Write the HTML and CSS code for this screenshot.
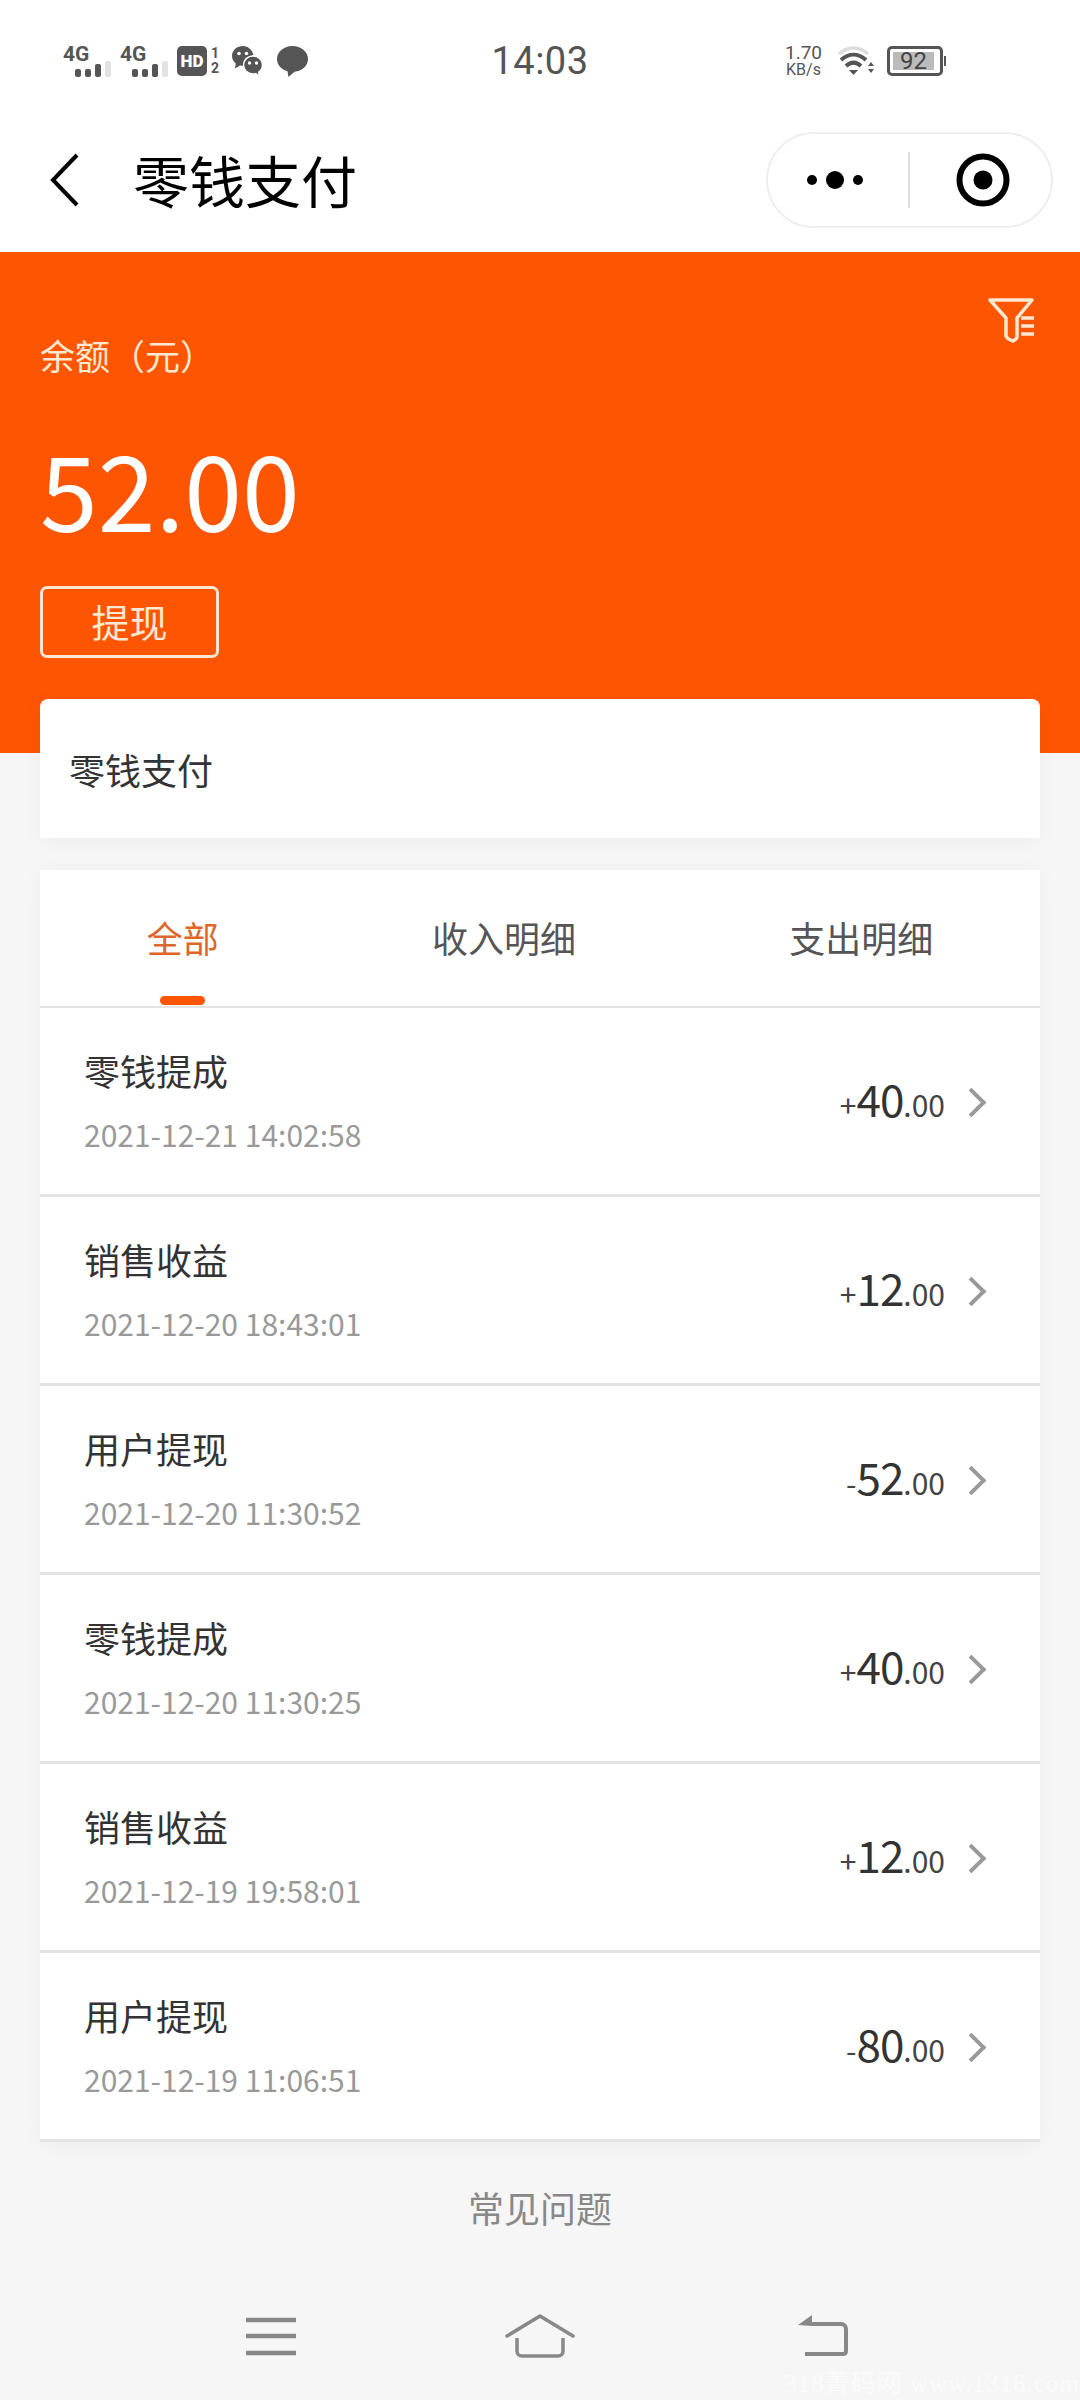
FILE: index.html
```html
<!DOCTYPE html>
<html>
<head>
  <meta charset="utf-8">
  <title>零钱支付</title>
  <link rel="stylesheet" href="styles.css">
</head>
<body>
  <div class="status-bar">
    <div class="status-left">
      <div class="signal">
        <span class="signal-text">4G</span>
        <span class="signal-bars"><i></i><i></i><i></i><i class="off"></i></span>
      </div>
      <div class="signal">
        <span class="signal-text">4G</span>
        <span class="signal-bars"><i></i><i></i><i></i><i class="off"></i></span>
      </div>
      <span class="hd-box">HD</span>
      <span class="sim-num"><span>1</span><span>2</span></span>
      <svg class="icon-wechat" width="31" height="30" viewBox="0 0 31 30">
        <path d="M11 0C5 0 0 4 0 10c0 3.200 1.600 5.800 3.800 7.600L3 22.500l5-3c1 .3 2 .4 3 .4 1.200 0 2.300-.2 3.400-.5C13.900 18 15 11 21.500 9 20.500 4 16 0 11 0z" fill="#555"/>
        <circle cx="7" cy="7.500" r="1.800" fill="#fff"/>
        <circle cx="14.500" cy="7.500" r="1.800" fill="#fff"/>
        <path d="M21 10c-5.500 0-9.500 4-9.500 9s4 9 9.500 9c1 0 1.800-.1 2.600-.4l3.900 2.400-.7-3.800c2.300-1.700 3.700-4.200 3.700-7.200 0-5-4-9-9.500-9z" fill="#555" stroke="#fff" stroke-width="1.500"/>
        <circle cx="17.500" cy="17" r="1.700" fill="#fff"/>
        <circle cx="24.500" cy="17" r="1.700" fill="#fff"/>
      </svg>
      <svg class="icon-bubble" width="31" height="31" viewBox="0 0 31 31">
        <path d="M15.500 0C7 0 0 5.600 0 13c0 6 4.500 10.800 10.500 12.300L11.500 31l6-5.200C25 25.200 31 20 31 13 31 5.600 24 0 15.500 0z" fill="#555"/>
      </svg>
    </div>
    <div class="status-time">14:03</div>
    <div class="status-right">
      <div class="net-speed">
        <span class="speed-num">1.70</span>
        <span class="speed-unit">KB/s</span>
      </div>
      <svg class="icon-wifi" width="38" height="32" viewBox="0 0 38 32">
        <path d="M2 9C11 1 22 1 31 9" fill="none" stroke="#ddd" stroke-width="3.500"/>
        <path d="M4 15C12 8 21 8 29 15" fill="none" stroke="#555" stroke-width="4"/>
        <path d="M9 21C14 16.500 19 16.500 24 21" fill="none" stroke="#555" stroke-width="4"/>
        <path d="M12 25h9l-4.500 5z" fill="#555"/>
        <path d="M31 21l3-4 3 4zM31 24l3 4 3-4z" fill="#555"/>
      </svg>
      <div class="battery">
        <div class="battery-body"><span class="battery-level">92</span></div>
        <span class="battery-nub"></span>
      </div>
    </div>
  </div>

  <div class="nav-bar">
    <svg class="icon-back" width="30" height="54" viewBox="0 0 30 54">
      <path d="M27 2L3 27l24 25" fill="none" stroke="#000" stroke-width="4"/>
    </svg>
    <div class="nav-title">零钱支付</div>
    <div class="capsule">
      <svg class="icon-dots" width="60" height="20" viewBox="0 0 60 20">
        <circle cx="7" cy="10" r="5" fill="#000"/>
        <circle cx="30" cy="10" r="9" fill="#000"/>
        <circle cx="53" cy="10" r="5" fill="#000"/>
      </svg>
      <span class="capsule-line"></span>
      <svg class="icon-target" width="54" height="54" viewBox="0 0 54 54">
        <circle cx="27" cy="27" r="23.500" fill="none" stroke="#000" stroke-width="6"/>
        <circle cx="27" cy="27" r="9.500" fill="#000"/>
      </svg>
    </div>
  </div>

  <div class="hero">
    <svg class="icon-filter" width="48" height="46" viewBox="0 0 48 46">
      <path d="M3 3h42L30 21v19c0 2-2 3-4 4-3-1-6-2-7-5V21z" fill="none" stroke="#ffe8d2" stroke-width="3.500" stroke-linejoin="round"/>
      <path d="M34 21h13M34 29h13M34 37h13" stroke="#ffe8d2" stroke-width="3.500"/>
    </svg>
    <div class="hero-label">余额（元）</div>
    <div class="hero-amount">52.00</div>
    <div class="withdraw-btn">提现</div>
  </div>

  <div class="card wallet-card">零钱支付</div>

  <div class="card record-card">
    <div class="tabs">
      <div class="tab active">全部</div>
      <div class="tab">收入明细</div>
      <div class="tab">支出明细</div>
    </div>

    <div class="record-row">
      <div class="record-info">
        <div class="record-title">零钱提成</div>
        <div class="record-date">2021-12-21 14:02:58</div>
      </div>
      <div class="record-amount"><span class="small">+</span><span class="big">40</span><span class="small">.00</span></div>
      <span class="chevron"></span>
    </div>
    <div class="record-row">
      <div class="record-info">
        <div class="record-title">销售收益</div>
        <div class="record-date">2021-12-20 18:43:01</div>
      </div>
      <div class="record-amount"><span class="small">+</span><span class="big">12</span><span class="small">.00</span></div>
      <span class="chevron"></span>
    </div>
    <div class="record-row">
      <div class="record-info">
        <div class="record-title">用户提现</div>
        <div class="record-date">2021-12-20 11:30:52</div>
      </div>
      <div class="record-amount"><span class="small">-</span><span class="big">52</span><span class="small">.00</span></div>
      <span class="chevron"></span>
    </div>
    <div class="record-row">
      <div class="record-info">
        <div class="record-title">零钱提成</div>
        <div class="record-date">2021-12-20 11:30:25</div>
      </div>
      <div class="record-amount"><span class="small">+</span><span class="big">40</span><span class="small">.00</span></div>
      <span class="chevron"></span>
    </div>
    <div class="record-row">
      <div class="record-info">
        <div class="record-title">销售收益</div>
        <div class="record-date">2021-12-19 19:58:01</div>
      </div>
      <div class="record-amount"><span class="small">+</span><span class="big">12</span><span class="small">.00</span></div>
      <span class="chevron"></span>
    </div>
    <div class="record-row">
      <div class="record-info">
        <div class="record-title">用户提现</div>
        <div class="record-date">2021-12-19 11:06:51</div>
      </div>
      <div class="record-amount"><span class="small">-</span><span class="big">80</span><span class="small">.00</span></div>
      <span class="chevron"></span>
    </div>
  </div>

  <div class="faq">常见问题</div>

  <div class="system-nav">
    <svg width="52" height="40" viewBox="0 0 52 40">
      <path d="M1 4h50M1 20h50M1 37h50" stroke="#888" stroke-width="4.500"/>
    </svg>
    <svg class="nav-home" width="70" height="44" viewBox="0 0 70 44">
      <path d="M2 22L35 2l33 20" fill="none" stroke="#888" stroke-width="3.500" stroke-linecap="round" stroke-linejoin="round"/>
      <path d="M12 24v13c0 3 2 5 5 5h36c3 0 5-2 5-5V24" fill="none" stroke="#888" stroke-width="3.500"/>
    </svg>
    <svg class="nav-return" width="52" height="42" viewBox="0 0 52 42">
      <path d="M1 10L15 0v11z" fill="#888"/>
      <path d="M14 9h30c3 0 5 2 5 5v22c0 2-1 3-3 3H8" fill="none" stroke="#888" stroke-width="4"/>
    </svg>
  </div>

  <div class="watermark">318菁码网 www.1318.com</div>
</body>
</html>
```

FILE: styles.css
```css
* {
  box-sizing: border-box;
}

html,
body {
  margin: 0;
  padding: 0;
}

body {
  position: relative;
  width: 1080px;
  height: 2400px;
  overflow: hidden;
  background-color: #f6f6f7;
  font-family: "Noto Sans CJK SC", "Noto Sans", sans-serif;
  color: #333;
}

/* status bar */
.status-bar {
  display: grid;
  grid-template-columns: 1fr auto 1fr;
  align-items: center;
  height: 122px;
  background-color: #fff;
  color: #555;
}

.status-left {
  display: flex;
  align-items: center;
  padding-left: 63px;
}

.status-right {
  display: flex;
  align-items: center;
  justify-content: flex-end;
  padding-right: 134px;
}

.status-time {
  font-family: Roboto, sans-serif;
  font-size: 38px;
  letter-spacing: 0.5px;
}

.signal {
  position: relative;
  width: 57px;
  height: 32px;
}

.signal-text {
  display: block;
  font-family: Roboto, sans-serif;
  font-size: 21px;
  font-weight: 700;
  line-height: 18px;
}

.signal-bars {
  position: absolute;
  left: 12px;
  bottom: 0;
  display: flex;
  align-items: flex-end;
  gap: 4px;
}

.signal-bars i {
  display: block;
  width: 6px;
  height: 8px;
  background-color: #555;
  border-radius: 2px;
}

.signal-bars i:nth-child(3) {
  height: 13px;
}

.signal-bars i.off {
  height: 16px;
  background-color: #e2e2e2;
}

.hd-box {
  width: 30px;
  height: 30px;
  border-radius: 5px;
  background-color: #555;
  color: #fff;
  font-family: Roboto, sans-serif;
  font-size: 17px;
  font-weight: 900;
  line-height: 30px;
  text-align: center;
}

.sim-num {
  display: flex;
  flex-direction: column;
  width: 12px;
  margin-left: 4px;
  font-family: Roboto, sans-serif;
  font-size: 14px;
  font-weight: 700;
  line-height: 15px;
}

.icon-wechat {
  margin-left: 9px;
}

.icon-bubble {
  margin-left: 14px;
}

.net-speed {
  display: flex;
  flex-direction: column;
  align-items: center;
  font-family: Roboto, sans-serif;
  color: #555;
}

.speed-num {
  font-size: 19px;
  line-height: 18px;
}

.speed-unit {
  font-size: 16px;
  line-height: 16px;
}

.icon-wifi {
  margin-left: 15px;
}

.battery {
  display: flex;
  align-items: center;
  margin-left: 12px;
}

.battery-body {
  width: 56px;
  height: 30px;
  padding: 3px;
  border: 3px solid #555;
  border-radius: 5px;
}

.battery-level {
  display: block;
  width: 41px;
  height: 18px;
  background-color: #bbb;
  color: #444;
  font-family: Roboto, sans-serif;
  font-size: 24px;
  line-height: 18px;
  text-align: center;
}

.battery-nub {
  width: 2px;
  height: 10px;
  margin-left: 1px;
  background-color: #555;
}

/* title bar */
.nav-bar {
  display: flex;
  align-items: center;
  height: 130px;
  padding: 0 27px 15px 50px;
  background-color: #fff;
}

.nav-title {
  margin-left: 53px;
  padding-bottom: 2px;
  color: #000;
  font-size: 56px;
  line-height: 64px;
}

.capsule {
  display: flex;
  align-items: center;
  width: 287px;
  height: 96px;
  margin-left: auto;
  padding-left: 37px;
  border: 2px solid #eee;
  border-radius: 48px;
}

.capsule-line {
  width: 2px;
  height: 56px;
  margin-left: 43px;
  background-color: #ddd;
}

.icon-target {
  margin-left: 46px;
}

/* balance */
.hero {
  position: relative;
  height: 501px;
  padding: 83px 40px 0;
  background-color: #fe5502;
}

.icon-filter {
  position: absolute;
  top: 45px;
  right: 45px;
}

.hero-label {
  color: #ffe8d2;
  font-size: 35px;
  line-height: 40px;
}

.hero-amount {
  margin-top: 52px;
  color: #fff;
  font-size: 104px;
  line-height: 120px;
}

.withdraw-btn {
  width: 179px;
  height: 72px;
  margin-top: 39px;
  border: 3px solid #ffe8d2;
  border-radius: 7px;
  color: #ffe8d2;
  font-size: 38px;
  line-height: 64px;
  text-align: center;
}

/* cards */
.card {
  width: 1000px;
  margin-left: 40px;
  background-color: #fff;
  box-shadow: 0 4px 24px rgba(0, 0, 0, 0.04);
}

.wallet-card {
  position: relative;
  height: 139px;
  margin-top: -54px;
  padding-left: 29px;
  border-radius: 8px 8px 0 0;
  font-size: 36px;
  line-height: 140px;
}

.record-card {
  margin-top: 32px;
}

.tabs {
  display: flex;
  justify-content: space-around;
  border-bottom: 2px solid #e4e4e6;
}

.tab {
  position: relative;
  height: 136px;
  color: #555;
  font-size: 36px;
  line-height: 134px;
}

.tab.active {
  color: #e0652a;
}

.tab.active::after {
  content: "";
  position: absolute;
  left: 50%;
  bottom: 1px;
  width: 45px;
  height: 9px;
  margin-left: -23px;
  background-color: #fe5502;
  border-radius: 5px;
}

/* records */
.record-row {
  display: flex;
  align-items: center;
  height: 189px;
  padding: 0 58px 1px 44px;
  border-bottom: 3px solid #e4e4e6;
}

.record-info {
  flex: 1;
}

.record-title {
  font-size: 36px;
  line-height: 46px;
}

.record-date {
  margin-top: 21px;
  color: #999;
  font-size: 30px;
  line-height: 40px;
}

.record-amount {
  margin-bottom: 5px;
  color: #444;
}

.record-amount .big {
  color: #333;
  font-size: 44px;
  letter-spacing: -1px;
}

.record-amount .small {
  font-size: 30px;
}

.chevron {
  width: 21px;
  height: 21px;
  margin: 4px 0 0 16px;
  border-top: 4px solid #999;
  border-right: 4px solid #999;
  transform: rotate(45deg);
}

/* footer */
.faq {
  margin-top: 40px;
  color: #888;
  font-size: 36px;
  line-height: 50px;
  text-align: center;
}

.system-nav {
  display: flex;
  align-items: center;
  margin-top: 82px;
  padding-left: 245px;
}

.nav-home {
  margin-left: 208px;
}

.nav-return {
  margin-left: 222px;
}

.watermark {
  position: absolute;
  right: 0;
  bottom: 2px;
  color: #fbfbfb;
  font-family: "Liberation Serif", "Noto Sans CJK SC", serif;
  font-size: 25px;
  line-height: 28px;
  letter-spacing: 1px;
  white-space: nowrap;
}
```
